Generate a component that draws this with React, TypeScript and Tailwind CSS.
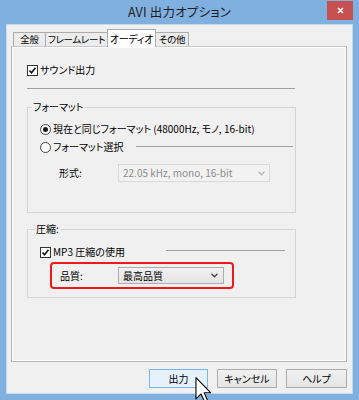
import React from "react";

const F = "font-['Noto_Sans_CJK_JP','Noto_Sans',sans-serif] [font-feature-settings:'palt']";

function CheckBox() {
  return (
    <div className="w-[11px] h-[11px] border border-[#333333] bg-white flex items-center justify-center shrink-0">
      <svg width="9" height="9" viewBox="0 0 9 9">
        <path d="M1.5 4.5 L3.5 6.8 L7.5 1.8" fill="none" stroke="#111" strokeWidth="1.6" />
      </svg>
    </div>
  );
}

function Radio({ on }: { on?: boolean }) {
  return (
    <div className="w-[11px] h-[11px] rounded-full border border-[#444444] bg-white flex items-center justify-center shrink-0">
      {on && <div className="w-[5px] h-[5px] rounded-full bg-[#1a1a1a]" />}
    </div>
  );
}

function Chevron({ color }: { color: string }) {
  return (
    <svg width="7" height="5" viewBox="0 0 7 5">
      <path d="M0.5 0.8 L3.5 3.8 L6.5 0.8" fill="none" stroke={color} strokeWidth="1.3" />
    </svg>
  );
}

export default function App() {
  return (
    <div className={`w-[359px] h-[400px] bg-[#80b0df] flex flex-col relative overflow-hidden text-[10px] text-black leading-none ${F}`}>
      {/* title bar */}
      <div className="h-[24px] relative flex items-center justify-center shrink-0">
        <span className="text-[12.5px] text-[#1e1e1e] tracking-[0.2px]">AVI 出力オプション</span>
        <div className="absolute right-[6px] top-[1px] w-[26px] h-[19px] bg-[#c75050] flex items-center justify-center">
          <svg width="7" height="7" viewBox="0 0 7 7">
            <path d="M1 1 L6 6 M6 1 L1 6" stroke="white" strokeWidth="1.6" />
          </svg>
        </div>
      </div>

      {/* client */}
      <div className="mx-[6px] mb-[6px] flex-1 border border-[#c5d9ee] bg-[#f0f0f0] flex flex-col">
        <div className="pt-[4px] pl-[4px] pr-[5px] flex flex-col">
          {/* tabs */}
          <div className="h-[17px] flex items-end pl-[2px] relative z-10 whitespace-nowrap text-[9.5px] tracking-[-0.3px]">
            <div className="h-[14px] w-[33px] border border-b-0 border-[#acacac] bg-[#ececec] flex items-center justify-center">全般</div>
            <div className="h-[14px] w-[62px] border border-b-0 border-l-0 border-[#acacac] bg-[#ececec] flex items-center justify-center">フレームレート</div>
            <div className="h-[18px] w-[49px] -ml-px -mr-px -mb-px border border-b-0 border-[#acacac] bg-white flex items-center justify-center text-[10px]">オーディオ</div>
            <div className="h-[14px] w-[34px] border border-b-0 border-[#acacac] bg-[#ececec] flex items-center justify-center">その他</div>
          </div>
          {/* panel */}
          <div className="h-[316px] border border-[#b5b5b5] border-t-[#c8c8c8] bg-[#f0f0f0]">
            <div className="h-full border border-white flex flex-col pl-[14px]">
              <div className="mt-[14px] h-[16px] flex items-center">
                <CheckBox />
                <span className="ml-[2px]">サウンド出力</span>
              </div>
              <div className="mt-[10px] h-px w-[268px] bg-[#a0a0a0]" />

              {/* group format */}
              <div className="relative mt-[18px] w-[269px] h-[106px] border border-[#d5d5d5] flex flex-col">
                <span className="absolute left-[4px] top-[-6px] bg-[#f0f0f0] px-[1px]">フォーマット</span>
                <div className="mt-[13px] pl-[12px] h-[16px] flex items-center">
                  <Radio on />
                  <span className="ml-[2px]">現在と同じフォーマット (48000Hz, モノ, 16-bit)</span>
                </div>
                <div className="mt-[2px] pl-[12px] h-[16px] flex items-center">
                  <Radio />
                  <span className="ml-[2px]">フォーマット選択</span>
                  <div className="ml-[12px] h-px w-[157px] bg-[#a0a0a0] mb-px" />
                </div>
                <div className="mt-[9px] pl-[31px] h-[18px] flex items-center">
                  <span className="w-[59px]">形式:</span>
                  <div className="w-[152px] h-[18px] border border-[#d9d9d9] bg-[#f2f2f2] flex items-center pl-[4px] pr-[4px] text-[#8c8c8c]">
                    <span className="flex-1">22.05 kHz, mono, 16-bit</span>
                    <Chevron color="#b5b5b5" />
                  </div>
                </div>
              </div>

              {/* group compression */}
              <div className="relative mt-[16px] w-[269px] h-[69px] border border-[#d5d5d5] flex flex-col">
                <span className="absolute left-[7px] top-[-6px] bg-[#f0f0f0] px-[1px]">圧縮:</span>
                <div className="mt-[14px] pl-[12px] h-[16px] flex items-center">
                  <CheckBox />
                  <span className="ml-[2px]">MP3 圧縮の使用</span>
                  <div className="ml-[41px] h-px w-[119px] bg-[#a0a0a0] mb-[3px]" />
                </div>
                <div className="mt-[2px] ml-[22px] w-[184px] h-[27px] border-2 border-[#f01818] rounded-[4px] flex items-center pl-[8px]">
                  <span className="w-[58px]">品質:</span>
                  <div className="w-[106px] h-[17px] border border-[#acacac] bg-gradient-to-b from-[#f2f2f2] to-[#e3e3e3] flex items-center pl-[4px] pr-[5px]">
                    <span className="flex-1">最高品質</span>
                    <Chevron color="#444" />
                  </div>
                </div>
              </div>
            </div>
          </div>

          {/* buttons */}
          <div className="mt-[7px] flex justify-end gap-[9px]">
            <div className="w-[59px] h-[19px] border border-[#7eb4ea] bg-[#e5f1fb] flex items-center justify-center">出力</div>
            <div className="w-[60px] h-[19px] border border-[#acacac] bg-gradient-to-b from-[#f0f0f0] to-[#e5e5e5] flex items-center justify-center">キャンセル</div>
            <div className="w-[61px] h-[19px] border border-[#acacac] bg-gradient-to-b from-[#f0f0f0] to-[#e5e5e5] flex items-center justify-center">ヘルプ</div>
          </div>
        </div>
      </div>

      {/* mouse cursor */}
      <svg className="absolute left-[195px] top-[377px]" width="17" height="26" viewBox="0 0 12 19">
        <path d="M0.5 0.5 L0.5 16 L4.2 12.4 L6.8 18.2 L9 17.2 L6.5 11.5 L11.2 11.5 Z" fill="white" stroke="black" strokeWidth="0.8" strokeLinejoin="round" />
      </svg>
    </div>
  );
}
